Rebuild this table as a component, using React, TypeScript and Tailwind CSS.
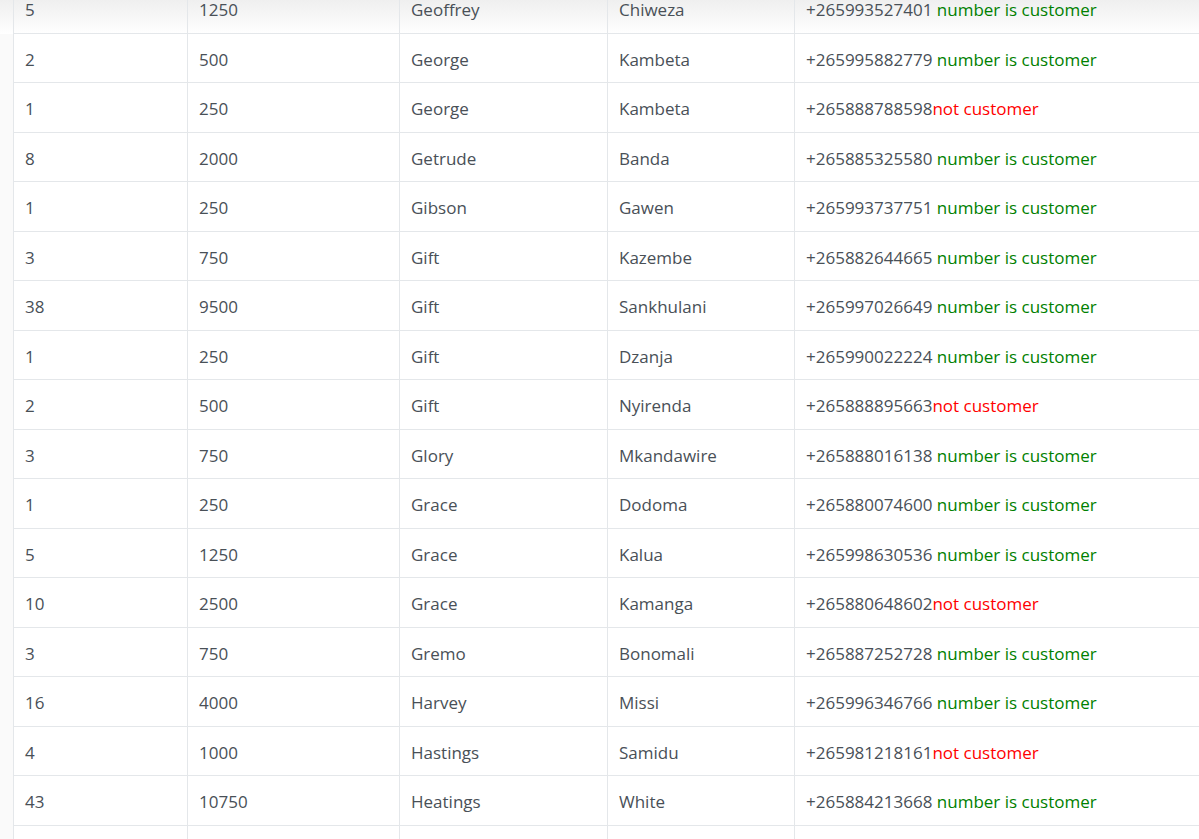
import React from 'react'

interface Row {
  count: number
  amount: number
  first: string
  last: string
  phone: string
  customer: boolean
}

const rows: Row[] = [
  { count: 5, amount: 1250, first: 'Geoffrey', last: 'Chiweza', phone: '+265993527401', customer: true },
  { count: 2, amount: 500, first: 'George', last: 'Kambeta', phone: '+265995882779', customer: true },
  { count: 1, amount: 250, first: 'George', last: 'Kambeta', phone: '+265888788598', customer: false },
  { count: 8, amount: 2000, first: 'Getrude', last: 'Banda', phone: '+265885325580', customer: true },
  { count: 1, amount: 250, first: 'Gibson', last: 'Gawen', phone: '+265993737751', customer: true },
  { count: 3, amount: 750, first: 'Gift', last: 'Kazembe', phone: '+265882644665', customer: true },
  { count: 38, amount: 9500, first: 'Gift', last: 'Sankhulani', phone: '+265997026649', customer: true },
  { count: 1, amount: 250, first: 'Gift', last: 'Dzanja', phone: '+265990022224', customer: true },
  { count: 2, amount: 500, first: 'Gift', last: 'Nyirenda', phone: '+265888895663', customer: false },
  { count: 3, amount: 750, first: 'Glory', last: 'Mkandawire', phone: '+265888016138', customer: true },
  { count: 1, amount: 250, first: 'Grace', last: 'Dodoma', phone: '+265880074600', customer: true },
  { count: 5, amount: 1250, first: 'Grace', last: 'Kalua', phone: '+265998630536', customer: true },
  { count: 10, amount: 2500, first: 'Grace', last: 'Kamanga', phone: '+265880648602', customer: false },
  { count: 3, amount: 750, first: 'Gremo', last: 'Bonomali', phone: '+265887252728', customer: true },
  { count: 16, amount: 4000, first: 'Harvey', last: 'Missi', phone: '+265996346766', customer: true },
  { count: 4, amount: 1000, first: 'Hastings', last: 'Samidu', phone: '+265981218161', customer: false },
  { count: 43, amount: 10750, first: 'Heatings', last: 'White', phone: '+265884213668', customer: true },
]

const cell = 'border border-t-0 border-[#e4e7ea] pl-[11px] pr-3 pt-[14px] pb-[10px] align-top leading-[24.5px]'

export default function App() {
  return (
    <div
      className="relative h-[839px] overflow-hidden bg-[#fafafa] text-[17px] text-[#495057]"
      style={{ fontFamily: '"Open Sans", "Noto Sans", Arial, sans-serif' }}
    >
      {/* shadow of the fixed header sitting above, drawn behind the first row */}
      <div className="absolute inset-x-0 top-0 h-[34px] bg-gradient-to-b from-[#efefef] to-white" />
      <div className="relative pl-[13px] -mt-[16px]">
        <table className="table-fixed border-collapse w-[1300px]">
          <colgroup>
            <col className="w-[174px]" />
            <col className="w-[212px]" />
            <col className="w-[208px]" />
            <col className="w-[187px]" />
            <col />
          </colgroup>
          <tbody>
            {rows.map((r, i) => {
              const bg = i === 0 ? '' : 'bg-white'
              return (
                <tr key={i}>
                  <td className={`${cell} ${bg}`}>{r.count}</td>
                  <td className={`${cell} ${bg}`}>{r.amount}</td>
                  <td className={`${cell} ${bg}`}>{r.first}</td>
                  <td className={`${cell} ${bg}`}>{r.last}</td>
                  <td className={`${cell} ${bg}`}>
                    {r.phone}
                    {r.customer ? (
                      <span className="text-[#008000]"> number is customer</span>
                    ) : (
                      <span className="text-[#ff0000]">not customer</span>
                    )}
                  </td>
                </tr>
              )
            })}
            <tr>
              <td className={`${cell} bg-white`}>&nbsp;</td>
              <td className={`${cell} bg-white`}></td>
              <td className={`${cell} bg-white`}></td>
              <td className={`${cell} bg-white`}></td>
              <td className={`${cell} bg-white`}></td>
            </tr>
          </tbody>
        </table>
      </div>
    </div>
  )
}
